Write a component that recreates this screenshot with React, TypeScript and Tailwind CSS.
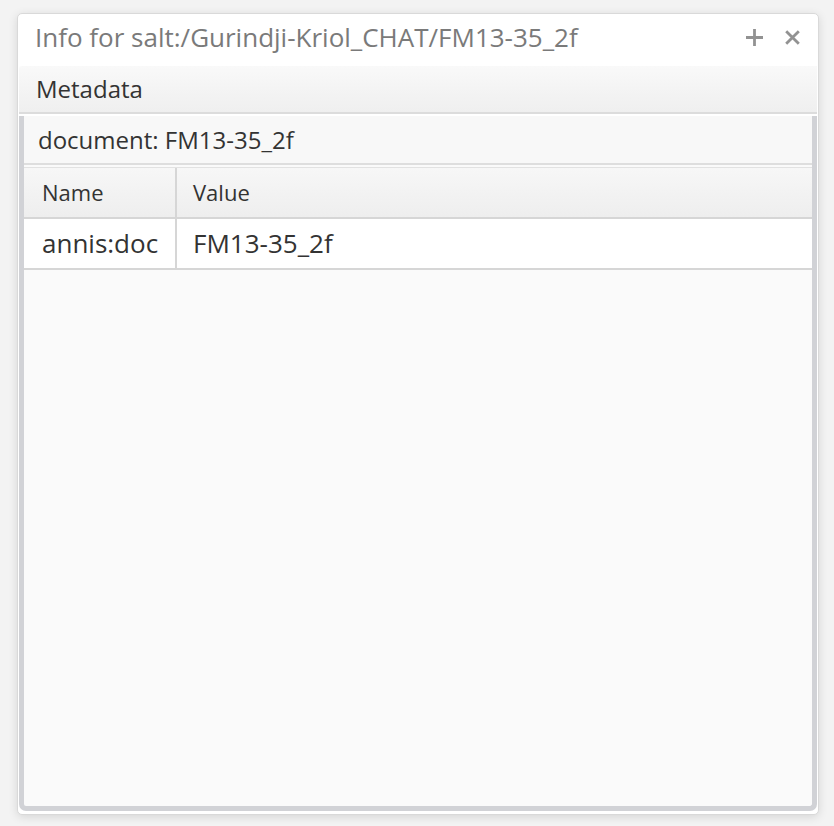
export default function App() {
  return (
    <div
      className="w-[834px] h-[826px] bg-[#f3f3f3] pt-[13px] pl-[17px]"
      style={{ fontFamily: '"Open Sans", "Noto Sans", sans-serif' }}
    >
      <div className="w-[802px] h-[802px] rounded-[5px] border border-[#d9d9d9] bg-white shadow-[0_2px_10px_rgba(0,0,0,0.12)] flex flex-col overflow-hidden">
        <div className="h-[52px] shrink-0 flex items-center justify-between pl-[17px] pr-[18px] pb-[6px]">
          <span className="text-[26px] text-[#7a7a7a] leading-none">
            Info for salt:/Gurindji-Kriol_CHAT/FM13-35_2f
          </span>
          <div className="flex items-center gap-[22px] text-[#929292]">
            <svg width="17" height="17" viewBox="0 0 17 17">
              <path d="M8.5 0v17M0 8.5h17" stroke="currentColor" strokeWidth="2.8" />
            </svg>
            <svg width="15" height="15" viewBox="0 0 15 15">
              <path d="M1.2 1.2l12.6 12.6M13.8 1.2l-12.6 12.6" stroke="currentColor" strokeWidth="2.8" />
            </svg>
          </div>
        </div>
        <div className="flex-1 flex flex-col pl-[1px] pr-[1px] pb-[3px]">
          <div className="h-[48px] shrink-0 flex items-center pl-[17px] text-[24px] text-[#333] bg-gradient-to-b from-[#f9f9f9] to-[#efefef] border-b-[2px] border-[#dcdcdc] rounded-tl-[3px]">
            Metadata
          </div>
          <div className="flex-1 flex flex-col mt-[2px] border-l-[5px] border-r-[5px] border-b-[5px] border-[#d1d2d6] rounded-b-[7px] bg-[#fafafa]">
            <div className="h-[49px] shrink-0 flex items-center pl-[14px] text-[24px] text-[#333] bg-[#f8f8f8] border-b-[2px] border-[#dedede]">
              document: FM13-35_2f
            </div>
            <div className="mt-[2px] border-t border-[#e2e2e2]">
              <div className="flex h-[51px] bg-gradient-to-b from-[#f7f7f7] to-[#eeeeee] border-b-[2px] border-[#d6d6d6] text-[22px] text-[#333]">
                <div className="w-[153px] shrink-0 flex items-center pl-[18px] border-r-[2px] border-[#d6d6d6]">
                  Name
                </div>
                <div className="flex-1 flex items-center pl-[16px]">Value</div>
              </div>
              <div className="flex h-[51px] bg-white border-b-[2px] border-[#d6d6d6] text-[26px] text-[#333]">
                <div className="w-[153px] shrink-0 flex items-center pl-[18px] border-r-[2px] border-[#d6d6d6]">
                  annis:doc
                </div>
                <div className="flex-1 flex items-center pl-[16px]">FM13-35_2f</div>
              </div>
            </div>
          </div>
        </div>
      </div>
    </div>
  );
}
